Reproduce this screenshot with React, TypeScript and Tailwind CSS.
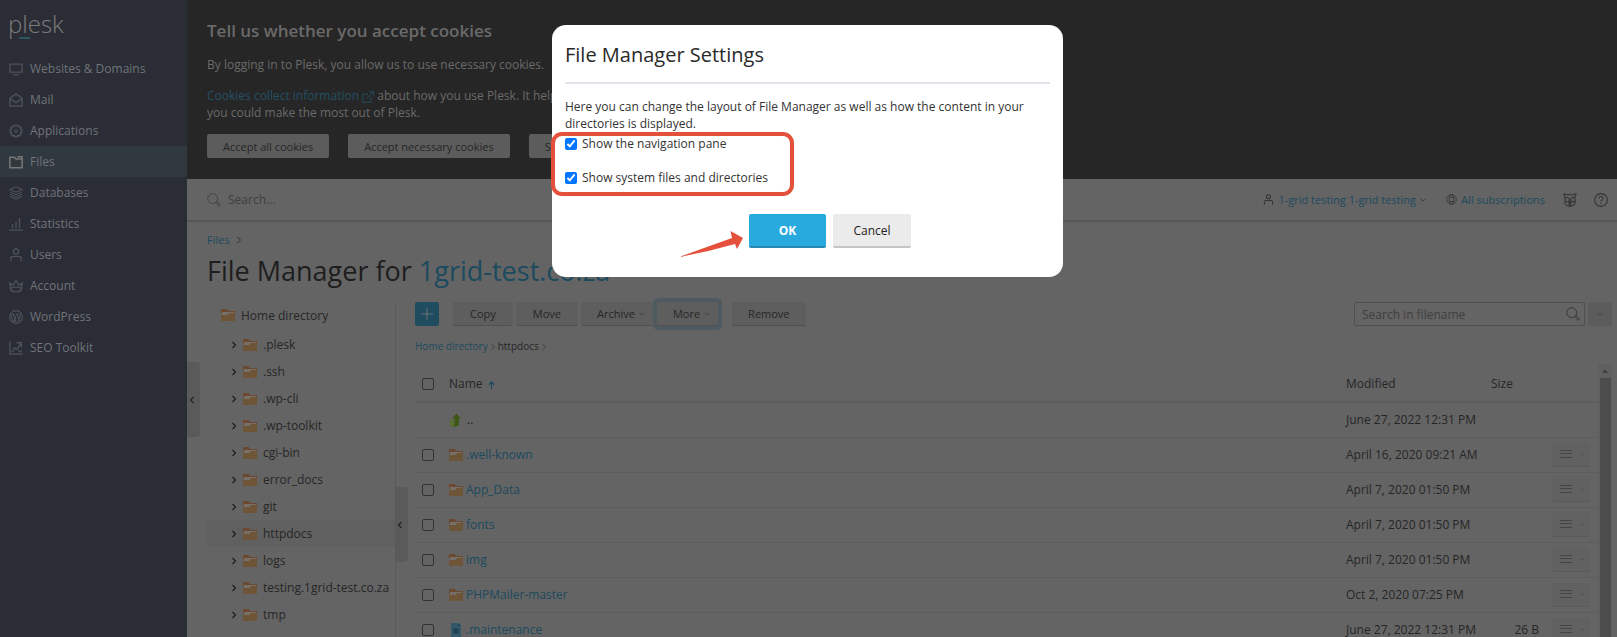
import { useState } from "react";
import type { ReactNode } from "react";

type IconProps = { className?: string };

function Icon({ className = "size-[14px]", children }: IconProps & { children: ReactNode }) {
  return (
    <svg
      viewBox="0 0 16 16"
      className={className + " shrink-0"}
      fill="none"
      stroke="currentColor"
      strokeWidth="1.2"
      aria-hidden="true"
    >
      {children}
    </svg>
  );
}

const ScreenIcon = () => (
  <Icon>
    <path d="M1 2.500h14v9H1zM4.500 14.500h7" strokeWidth="1.500" />
  </Icon>
);

const MailIcon = () => (
  <Icon>
    <path d="M1 6 8 1l7 5v9H1zM1.500 6.500 8 11l6.500-4.500" strokeWidth="1.500" />
  </Icon>
);

const GearIcon = () => (
  <Icon>
    <path
      d="M6.500 1.200h3l.4 1.900 1.600-1 2.400 2.400-1 1.600 1.900.4v3l-1.900.4 1 1.600-2.400 2.400-1.600-1-.4 1.900h-3l-.4-1.900-1.600 1-2.400-2.400 1-1.600-1.900-.4v-3l1.900-.4-1-1.600 2.400-2.400 1.600 1z"
      strokeWidth="1.500"
    />
    <circle cx="8" cy="8" r="1.500" />
  </Icon>
);

const FilesIcon = () => (
  <Icon>
    <path d="M1 14.500v-12h5l2 2h7v10zM9.500 2h5.500v2.500" strokeWidth="1.700" />
  </Icon>
);

const LayersIcon = () => (
  <Icon>
    <path d="M8 1 15 4 8 7 1 4zM1 6.700l7 3.200 7-3.200M1 9.300l7 3.200 7-3.200M1 11.900l7 3.200 7-3.200" />
  </Icon>
);

const StatsIcon = () => (
  <Icon>
    <path d="M0 15h16M4 13V8M8 13V5M12 13V1" strokeWidth="1.500" />
  </Icon>
);

const UserIcon = ({ className }: IconProps) => (
  <Icon className={className}>
    <circle cx="8" cy="4" r="3" strokeWidth="1.500" />
    <path d="M2 15.500V12q0-2.500 2.500-2.500h7Q14 9.500 14 12v3.500" strokeWidth="1.500" />
  </Icon>
);

const CrownIcon = () => (
  <Icon>
    <path d="M2 13 1 4.500l3.500 2.700L8 2l3.500 5.200L15 4.500 14 13q-6 3.500-12 0zM2 10.500q6-2.500 12 0" strokeWidth="1.500" />
  </Icon>
);

const WordPressIcon = () => (
  <Icon>
    <circle cx="8" cy="8" r="7.300" />
    <path d="m2 5.500 3.500 8.500M3 5h3.200M5 5l3.200 8.500M5.700 13.500 8 7M7.500 5h3.500M9.300 5l2.600 7.500M10.500 13.500 13 7l-.8-3" />
  </Icon>
);

const SeoIcon = () => (
  <Icon>
    <path d="M1 0v15h15M3.500 12.500l3-4.500 2.500 1.500L14 2.500M8.500 2H14v5.500M11.500 10v3M14 10v3" strokeWidth="1.500" />
  </Icon>
);

const SearchIcon = () => (
  <Icon>
    <circle cx="6.500" cy="6.500" r="5.700" strokeWidth="1" />
    <path d="m10.500 10.800 1-1 4 3.700-1.700 1.800z" strokeWidth="1" />
  </Icon>
);

const GlobeIcon = () => (
  <Icon className="size-[11px]">
    <circle cx="8" cy="8" r="7" />
    <ellipse cx="8" cy="8" rx="3.300" ry="7" />
    <path d="M5 5h6M5 11h6" />
  </Icon>
);

const MascotIcon = () => (
  <Icon>
    <path d="M3 5.500C1.500 4 1 2.500 1.300.8L5 2.300q3-1 6 0L14.700.8C15 2.500 14.500 4 13 5.500" />
    <circle cx="4.700" cy="7.700" r="2.500" />
    <circle cx="11.300" cy="7.700" r="2.500" />
    <path d="M2 9C1.300 12.700 5 15.300 8 15.300S14.700 12.700 14 9M8 8v6.500M6 11h4M6 12.800h4" />
  </Icon>
);

const HelpIcon = () => (
  <Icon>
    <circle cx="8" cy="8" r="7.300" />
    <path d="M5.700 6.300q0-2.300 2.300-2.300t2.300 2q0 1.200-1.300 1.900Q8 8.400 8 9.700M8 11v1.500" />
  </Icon>
);

const ExternalIcon = () => (
  <Icon className="size-[12px] inline-block">
    <path d="M12 8v7H1V4h7M6 10 15 1M9.500 1H15v5.500" />
  </Icon>
);

const SortIcon = () => (
  <svg viewBox="0 0 7 8" className="ml-0.5 inline-block h-2 w-[7px] text-[#1c4a5e]" fill="none" stroke="currentColor" strokeWidth="1.300" aria-hidden="true">
    <path d="M3.500 8V1M.8 3.700l2.700-2.700 2.700 2.700" />
  </svg>
);

/** Small arrow head, pointing down unless rotated */
const Chevron = ({ className = "size-2" }: IconProps) => (
  <svg viewBox="0 0 8 8" className={"shrink-0 " + className} fill="none" stroke="currentColor" strokeWidth="1.100" aria-hidden="true">
    <path d="m1 2.500 3 3 3-3" />
  </svg>
);

const FolderIcon = () => (
  <svg viewBox="0 0 14 12" className="h-3 w-[14px] shrink-0" aria-hidden="true">
    <path d="M0 0h6l1 2h7v3H0z" fill="#6c4831" />
    <path d="M1 3h12v4H1z" fill="#777069" />
    <path d="M0 6h6.500L8 4h6v8H0z" fill="#6f5537" />
  </svg>
);

const DocumentIcon = () => (
  <svg viewBox="0 0 14 14" className="size-[14px] shrink-0" aria-hidden="true">
    <path d="M2 0h7l3 3v11H2z" fill="#33586a" />
    <path d="M9 0v3h3z" fill="#1d4152" />
    <path d="M4.500 5.500h5v5h-5z" fill="#1d4152" />
  </svg>
);

const UpIcon = () => (
  <svg viewBox="0 0 14 14" className="size-[14px] shrink-0" aria-hidden="true">
    <path d="M1 7h4v4h3v2.500H1z" fill="#566f31" />
    <path d="M7.500.5 12 5.500h-2V11q0 2.500-3 2.500H4Q5.500 13 5.500 10V5.500H3z" fill="#3e5717" />
  </svg>
);

const navItems = [
  { label: "Websites & Domains", icon: ScreenIcon },
  { label: "Mail", icon: MailIcon },
  { label: "Applications", icon: GearIcon },
  { label: "Files", icon: FilesIcon, active: true },
  { label: "Databases", icon: LayersIcon },
  { label: "Statistics", icon: StatsIcon },
  { label: "Users", icon: UserIcon },
  { label: "Account", icon: CrownIcon },
  { label: "WordPress", icon: WordPressIcon },
  { label: "SEO Toolkit", icon: SeoIcon },
];

const directories = [
  ".plesk",
  ".ssh",
  ".wp-cli",
  ".wp-toolkit",
  "cgi-bin",
  "error_docs",
  "git",
  "httpdocs",
  "logs",
  "testing.1grid-test.co.za",
  "tmp",
];

const files = [
  { name: ".well-known", modified: "April 16, 2020 09:21 AM", size: "", folder: true },
  { name: "App_Data", modified: "April 7, 2020 01:50 PM", size: "", folder: true },
  { name: "fonts", modified: "April 7, 2020 01:50 PM", size: "", folder: true },
  { name: "img", modified: "April 7, 2020 01:50 PM", size: "", folder: true },
  { name: "PHPMailer-master", modified: "Oct 2, 2020 07:25 PM", size: "", folder: true },
  { name: ".maintenance", modified: "June 27, 2022 12:31 PM", size: "26 B", folder: false },
];

function Sidebar() {
  return (
    <aside className="w-[187px] shrink-0 bg-[#2a2d35]">
      <a href="#home" className="relative block h-[53px] pl-2 pt-2 font-light text-2xl text-[#7c7c7c]">
        plesk
        <span className="absolute left-[19px] top-[37px] h-[2px] w-[11px] bg-[#2c5960]" />
      </a>
      <nav>
        {navItems.map(({ label, icon: NavIcon, active }) => (
          <a
            key={label}
            href="#nav"
            className={
              "flex h-[31px] items-center gap-[7px] pl-[9px] " +
              (active ? "bg-[#30393f] text-[#777]" : "text-[#4e525a]")
            }
          >
            <NavIcon />
            <span className="text-[#707379]">{label}</span>
          </a>
        ))}
      </nav>
    </aside>
  );
}

function CookieBanner() {
  const button = "h-6 rounded-xs bg-[#5c5c5c] px-4 text-[11px] font-medium text-[#262626]";
  return (
    <section className="h-[179px] bg-[#262626] px-5 pt-[19px] text-[#6a6a6a]">
      <h2 className="text-[17px] leading-6 font-semibold">Tell us whether you accept cookies</h2>
      <p className="mt-[13px] leading-[17px]">By logging in to Plesk, you allow us to use necessary cookies.</p>
      <p className="mt-[14px] leading-[17px]">
        <a href="#cookies" className="text-[#245064]">
          Cookies collect information <ExternalIcon />
        </a>{" "}
        about how you use Plesk. It help
        <br />
        you could make the most out of Plesk.
      </p>
      <div className="mt-[13px] flex gap-[19px]">
        <button type="button" className={button}>Accept all cookies</button>
        <button type="button" className={button}>Accept necessary cookies</button>
        <button type="button" className={button}>S</button>
      </div>
    </section>
  );
}

function TopBar() {
  return (
    <header className="flex h-[43px] items-center border-b-2 border-[#575757] pl-5 pr-[9px] text-[11px] font-medium text-[#1c4a5e]">
      <label className="flex flex-1 items-center gap-[7px] text-xs font-normal text-[#3f3f3f]">
        <SearchIcon />
        <input type="text" placeholder="Search..." aria-label="Search" className="bg-transparent outline-none placeholder:text-[#3f3f3f]" />
      </label>
      <button type="button" className="flex items-center gap-1">
        <UserIcon className="size-[11px] text-[#333]" />
        1-grid testing 1-grid testing
        <Chevron className="size-[6px] text-[#333]" />
      </button>
      <button type="button" className="ml-5 flex items-center gap-1">
        <span className="text-[#333]"><GlobeIcon /></span>
        All subscriptions
      </button>
      <button type="button" aria-label="Extensions" className="ml-[18px] text-[#333]"><MascotIcon /></button>
      <button type="button" aria-label="Help" className="ml-[17px] text-[#333]"><HelpIcon /></button>
    </header>
  );
}

function Tree() {
  return (
    <div className="relative w-[189px] shrink-0 border-r border-[#5a5a5a]">
      <div className="flex h-[29px] items-center gap-[6px] pb-[3px] pl-[14px]">
        <FolderIcon />
        Home directory
      </div>
      <ul>
        {directories.map((name) => (
          <li
            key={name}
            className={"flex h-[27px] items-center pl-[23px] " + (name === "httpdocs" ? "bg-[#606060]" : "")}
          >
            <Chevron className="size-2 -rotate-90 text-[#1a1a1a]" />
            <span className="ml-[5px] mr-[6px] flex"><FolderIcon /></span>
            <span className="whitespace-nowrap">{name}</span>
          </li>
        ))}
      </ul>
      <button
        type="button"
        aria-label="Collapse tree"
        className="absolute left-full top-[185px] flex h-[75px] w-[13px] items-center rounded-r-sm bg-[#5a5a5a] pl-px text-[#222]"
      >
        <Chevron className="size-2 rotate-90" />
      </button>
    </div>
  );
}

function Toolbar() {
  const button = "flex h-6 items-center gap-1 rounded-xs border-b border-[#505050] bg-[#5e5e5e] text-[11px] font-medium text-[#262626]";
  return (
    <div className="flex items-center pr-[5px]">
      <button type="button" aria-label="Add" className="flex size-6 items-center justify-center rounded-xs bg-[#204c5f] text-[#777]">
        <Icon className="size-3"><path d="M8 0v16M0 8h16" /></Icon>
      </button>
      <button type="button" className={button + " ml-[14px] px-[17px]"}>Copy</button>
      <button type="button" className={button + " ml-[3px] px-[17px]"}>Move</button>
      <button type="button" className={button + " ml-[3px] pl-4 pr-2"}>Archive <Chevron className="size-[6px] text-[#3f3f3f]" /></button>
      <button type="button" className={button + " ml-1 pl-4 pr-2 ring-4 ring-[#4f5a60]"}>More <Chevron className="size-[6px] text-[#3f3f3f]" /></button>
      <button type="button" className={button + " ml-[14px] px-4"}>Remove</button>
      <label className="ml-auto flex h-6 w-[231px] items-center rounded-xs border border-[#505050] bg-[#646464] pl-[7px] pr-1 text-[#333]">
        <input type="text" placeholder="Search in filename" aria-label="Search in filename" className="min-w-0 flex-1 bg-transparent outline-none placeholder:text-[#3f3f3f]" />
        <SearchIcon />
      </label>
      <button type="button" aria-label="Search options" className="ml-[3px] flex size-6 items-center justify-center rounded-xs bg-[#5c5c5c] text-[#3f3f3f]">
        <Chevron className="size-[6px]" />
      </button>
    </div>
  );
}

const tick = "block size-3 appearance-none rounded-xs border border-[#333]";

function FileTable() {
  return (
    <div className="flex min-h-0 flex-1">
      <table className="flex-1 table-fixed border-collapse text-left">
        <colgroup>
          <col className="w-[34px]" />
          <col />
          <col className="w-[145px]" />
          <col className="w-[55px]" />
          <col className="w-[52px]" />
        </colgroup>
        <thead>
          <tr className="h-[38px] border-b-2 border-[#5d5d5d]">
            <th className="pl-[7px] pt-0.5"><input type="checkbox" aria-label="Select all" className={tick} /></th>
            <th className="pt-0.5 font-normal">Name <SortIcon /></th>
            <th className="pt-0.5 font-normal">Modified</th>
            <th className="pt-0.5 font-normal">Size</th>
            <th />
          </tr>
        </thead>
        <tbody>
          <tr className="h-[35px] border-b border-[#5d5d5d]">
            <td />
            <td><a href="#up" className="flex items-center gap-1"><UpIcon /> ..</a></td>
            <td className="whitespace-nowrap">June 27, 2022 12:31 PM</td>
            <td />
            <td />
          </tr>
          {files.map((file) => (
            <tr key={file.name} className="h-[35px] border-b border-[#5d5d5d]">
              <td className="pl-[7px]"><input type="checkbox" aria-label={file.name} className={tick} /></td>
              <td>
                <a href="#file" className="flex items-center gap-[3px] text-[#1c4a5e]">
                  {file.folder ? <FolderIcon /> : <DocumentIcon />}
                  {file.name}
                </a>
              </td>
              <td className="whitespace-nowrap">{file.modified}</td>
              <td className="pr-[7px] text-right">{file.size}</td>
              <td>
                <button type="button" aria-label={"Actions for " + file.name} className="ml-[6px] flex h-6 w-[38px] items-center gap-[7px] rounded-xs border-b border-[#5a5a5a] bg-[#616161] pl-2 text-[#444]">
                  <svg viewBox="0 0 12 10" className="h-[10px] w-3" stroke="currentColor" aria-hidden="true">
                    <path d="M0 1.500h12M0 4.500h12M0 8.500h12" />
                  </svg>
                  <Chevron className="size-[5px]" />
                </button>
              </td>
            </tr>
          ))}
        </tbody>
      </table>
      <div className="flex w-[14px] flex-col items-center bg-[#606060] self-stretch">
        <svg viewBox="0 0 14 14" className="size-[14px]" aria-hidden="true"><path d="m4 9 3-3.500L10 9z" fill="#3f3f3f" /></svg>
        <div className="w-[11px] flex-1 bg-[#4d4d4d]" />
      </div>
    </div>
  );
}

function SettingsDialog() {
  const [showPane, setShowPane] = useState(true);
  const [showSystem, setShowSystem] = useState(true);
  return (
    <div className="fixed inset-0 flex items-start justify-center pr-[2px] pt-[25px]">
      <form
        role="dialog"
        aria-label="File Manager Settings"
        onSubmit={(e) => e.preventDefault()}
        className="relative w-[511px] rounded-[14px] bg-white px-[13px] pb-[29px] text-[#333]"
      >
        <h2 className="border-b-2 border-[#e3e3ea] pb-[13px] pt-4 text-xl leading-7 text-[#2a2a2a]">File Manager Settings</h2>
        <p className="mt-[14px] leading-[17px]">
          Here you can change the layout of File Manager as well as how the content in your directories is displayed.
        </p>
        <label className="mt-[3px] flex items-center gap-[5px] leading-[17px]">
          <input type="checkbox" checked={showPane} onChange={(e) => setShowPane(e.target.checked)} className="size-3 accent-[#0075ff]" />
          Show the navigation pane
        </label>
        <label className="mt-[17px] flex items-center gap-[5px] leading-[17px]">
          <input type="checkbox" checked={showSystem} onChange={(e) => setShowSystem(e.target.checked)} className="size-3 accent-[#0075ff]" />
          Show system files and directories
        </label>
        <div className="mt-7 flex gap-[7px] pl-[184px]">
          <button type="submit" className="h-[34px] w-[77px] rounded-xs border-b-2 border-[#2489b3] bg-[#28aade] font-bold text-white">OK</button>
          <button type="button" className="h-[34px] w-[78px] rounded-xs border-b-2 border-[#c4c4c4] bg-[#ebebeb] font-medium text-[#222]">Cancel</button>
        </div>
        <div className="pointer-events-none absolute -left-px top-[107px] h-16 w-[243px] rounded-[11px] border-4 border-[#e5503c]" />
        <svg viewBox="0 0 64 28" className="pointer-events-none absolute left-[127px] top-[205px] h-7 w-16" aria-hidden="true">
          <path d="M0 27 53 8 51.500 1 64 8 58 19 56 14Q28 22 0 27z" fill="#e5503c" />
        </svg>
      </form>
    </div>
  );
}

export default function App() {
  return (
    <div className="flex h-screen overflow-hidden bg-[#646464] font-['Open_Sans',sans-serif] text-xs leading-[17px] text-[#262626]">
      <Sidebar />
      <main className="relative flex min-w-0 flex-1 flex-col">
        <CookieBanner />
        <TopBar />
        <div className="flex items-center gap-[5px] px-5 pt-[9px] text-[11px] leading-[17px]">
          <a href="#files" className="text-[#1c4a5e]">Files</a>
          <Chevron className="size-2 -rotate-90 text-[#444]" />
        </div>
        <h1 className="px-5 pt-1 text-[27px] leading-[38px] text-[#1e1e1e]">
          File Manager for <a href="#domain" className="text-[#1c4a5e]">1grid-test.co.za</a>
        </h1>
        <div className="mt-3 flex min-h-0 flex-1 pl-5">
          <Tree />
          <div className="flex min-w-0 flex-1 flex-col pl-[19px]">
            <Toolbar />
            <div className="mt-3 flex items-center text-[10px] leading-[17px]">
              <a href="#home" className="text-[#1c4a5e]">Home directory</a>
              <Chevron className="mx-px size-2 -rotate-90 text-[#505050]" />
              httpdocs
              <Chevron className="mx-px size-2 -rotate-90 text-[#505050]" />
            </div>
            <div className="mt-[9px] flex min-h-0 flex-1 pr-[5px]">
              <FileTable />
            </div>
          </div>
        </div>
        <button
          type="button"
          aria-label="Collapse sidebar"
          className="absolute left-0 top-[362px] flex h-[75px] w-[13px] items-center rounded-r-sm bg-[#5a5a5a] pl-px text-[#222]"
        >
          <Chevron className="size-2 rotate-90" />
        </button>
      </main>
      <SettingsDialog />
    </div>
  );
}
